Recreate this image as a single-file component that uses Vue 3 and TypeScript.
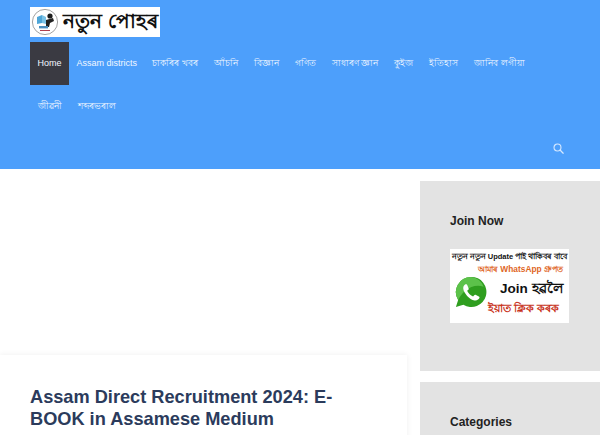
<template>
  <div class="page">
    <header class="site-header">
      <a class="logo">
        <svg class="logo-mark" viewBox="0 0 28 28" width="28" height="28" aria-hidden="true">
          <circle cx="14" cy="14" r="12.6" fill="#fff" stroke="#8a8a8a" stroke-width="0.8" />
          <path d="M6 9l5-2v8l-5 1z" fill="#4fa6d8" />
          <path d="M11 7l4 2v7l-4-1z" fill="#7cc4e8" />
          <circle cx="19" cy="8" r="2.6" fill="#1c1c1c" />
          <path d="M15 12l7-2 1 3-4 2-1 4h-3z" fill="#222" />
          <path d="M8 18h9v2.4H8z" fill="#4a8fc0" />
          <path d="M9 22h10v1H9z" fill="#b04050" />
        </svg>
        <span class="logo-text">নতুন পোহৰ</span>
      </a>
      <nav class="main-nav">
        <a
          v-for="item in navItems"
          :key="item.label"
          class="nav-item"
          :class="{ active: item.label === 'Home', bn: item.bn }"
        >{{ item.label }}</a>
      </nav>
      <div class="search-row">
        <svg class="search-icon" viewBox="0 0 12 12" width="11" height="11" aria-hidden="true">
          <circle cx="4.9" cy="4.9" r="3.8" fill="none" stroke="currentColor" stroke-width="1.2" />
          <path d="M7.7 7.7l3.4 3.4" stroke="currentColor" stroke-width="1.4" stroke-linecap="round" />
        </svg>
      </div>
    </header>

    <div class="content">
      <main class="main-col">
        <div class="ad-space"></div>
        <article class="post-card">
          <h1 class="post-title">Assam Direct Recruitment 2024: E-BOOK in Assamese Medium</h1>
        </article>
      </main>
      <aside class="sidebar">
        <section class="widget join-widget">
          <h2 class="widget-title">Join Now</h2>
          <div class="join-banner">
            <div class="banner-line first">নতুন নতুন Update পাই থাকিবৰ বাবে</div>
            <div class="banner-line orange">আমাৰ WhatsApp গ্ৰুপত</div>
            <div class="banner-mid">
              <svg class="wa-icon" viewBox="0 0 36 36" width="34" height="34" aria-hidden="true">
                <path d="M18 2a16 16 0 0 0-13.6 24.4L2 34l7.900-2.400A16 16 0 1 0 18 2z" fill="#2f9e1f" />
                <path d="M18 2a16 16 0 0 0-13.600 24.400c4-8 14-18 27-14A16 16 0 0 0 18 2z" fill="#5cc24a" />
                <path d="M12.500 9.500c-1.500.8-3 2.500-2.700 5 .6 4.500 6.500 11.500 12 12.500 2.500.4 4.700-1.200 5.200-2.800.2-.7-.1-1.200-.7-1.500l-3.500-1.700c-.6-.3-1-.1-1.400.4l-1.200 1.400c-2.500-.8-5.200-3.400-6.300-6l1.300-1.200c.4-.4.500-.8.300-1.300l-1.500-3.800c-.3-.7-.9-.8-1.500-.4z" fill="#fff" />
              </svg>
              <div class="banner-join">Join হৱলৈ</div>
            </div>
            <div class="banner-line red">ইয়াত ক্লিক কৰক</div>
          </div>
        </section>
        <section class="widget">
          <h2 class="widget-title">Categories</h2>
        </section>
      </aside>
    </div>
  </div>
</template>

<script setup lang="ts">
interface NavItem {
  label: string
  bn: boolean
}

const navItems: NavItem[] = [
  'Home',
  'Assam districts',
  'চাকৰিৰ খবৰ',
  'আঁচনি',
  'বিজ্ঞান',
  'গণিত',
  'সাধাৰণ জ্ঞান',
  'কুইজ',
  'ইতিহাস',
  'জানিব লগীয়া',
  'জীৱনী',
  'শব্দৰভৰাল',
].map((label) => ({ label, bn: !/^[A-Za-z ]+$/.test(label) }))
</script>

<style>
html,
body {
  margin: 0;
  background: #fff;
  overflow: hidden;
}
</style>

<style scoped>
.page {
  width: 600px;
  height: 435px;
  overflow: hidden;
  font-family: "Liberation Sans", Arial, sans-serif;
}

.site-header {
  height: 169px;
  box-sizing: border-box;
  padding: 7px 30px 0;
  background: #4d9ffb;
}

.logo {
  display: flex;
  align-items: center;
  width: 130px;
  height: 30px;
  padding-left: 1px;
  box-sizing: border-box;
  background: #fff;
}

.logo-mark {
  flex: none;
}

.logo-text {
  margin-left: 4px;
  font-size: 20px;
  font-weight: bold;
  color: #111;
  white-space: nowrap;
}

.main-nav {
  display: flex;
  flex-wrap: wrap;
  width: 510px;
  margin-top: 5px;
}

.nav-item {
  padding: 0 7.5px;
  font-size: 9px;
  line-height: 43px;
  color: #f2f7ff;
  white-space: nowrap;
}

.nav-item.bn {
  padding-right: 8.5px;
}

.nav-item.active {
  background: #3a3a42;
}

.search-row {
  display: flex;
  justify-content: flex-end;
  padding-top: 15px;
  margin-right: 6px;
}

.search-icon {
  color: #d5e8ff;
}

.content {
  display: grid;
  grid-template-columns: 407px 180px;
  column-gap: 13px;
  padding-top: 12px;
}

.ad-space {
  height: 174px;
}

.post-card {
  padding: 31px 30px 40px;
  background: #fff;
  box-shadow: 0 0 6px rgba(0, 0, 0, 0.07);
}

.post-title {
  margin: 0;
  font-size: 18.2px;
  line-height: 22px;
  font-weight: bold;
  color: #2b3b5c;
}

.widget {
  padding: 31px 30px 30px;
  background: #e3e3e3;
}

.join-widget {
  height: 190px;
  box-sizing: border-box;
  margin-bottom: 11px;
}

.widget-title {
  margin: 0 0 19px;
  font-size: 12px;
  line-height: 18px;
  font-weight: bold;
  color: #222;
}

.join-banner {
  width: 119px;
  height: 74px;
  box-sizing: border-box;
  padding: 1px 1px 0;
  background: #fff;
  text-align: center;
  overflow: hidden;
}

.banner-line {
  line-height: 13px;
  font-weight: bold;
  white-space: nowrap;
}

.banner-line.first {
  font-size: 7.5px;
  color: #111;
}

.banner-line.orange {
  padding-left: 22px;
  font-size: 8.4px;
  color: #e0661f;
}

.banner-line.red {
  margin-top: -5px;
  padding-left: 28px;
  font-size: 11px;
  color: #c8341c;
}

.banner-mid {
  display: flex;
  align-items: center;
  height: 31px;
}

.wa-icon {
  flex: none;
  margin-left: 3px;
}

.banner-join {
  margin-left: 12px;
  padding-bottom: 5px;
  font-size: 13.5px;
  font-weight: bold;
  color: #111;
  white-space: nowrap;
}
</style>
